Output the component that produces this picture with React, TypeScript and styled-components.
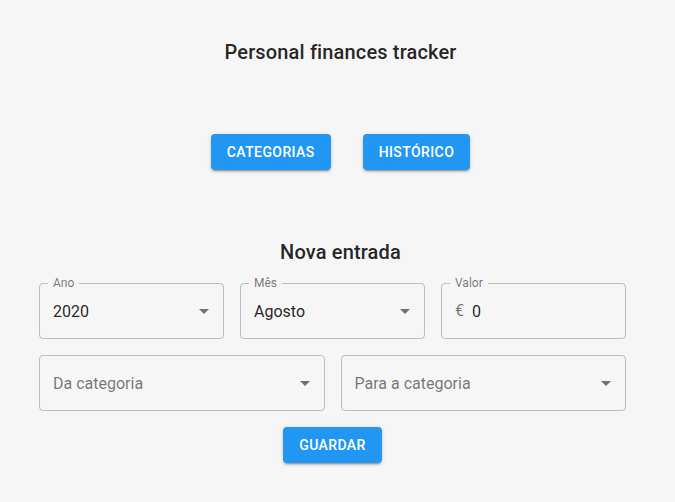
import React from "react";
import styled, { createGlobalStyle } from "styled-components";

const Global = createGlobalStyle`
  html, body { margin: 0; padding: 0; background: #f6f6f6; }
  body { font-family: Roboto, "Liberation Sans", Arial, sans-serif; color: rgba(0,0,0,0.87); }
`;

const Page = styled.div`
  width: 675px;
  min-height: 502px;
  padding-top: 36px;
  box-sizing: border-box;
`;

const Header = styled.header`
  display: flex;
  flex-direction: column;
  align-items: center;
  padding-left: 6px;
`;

const Title = styled.h6<{ $mt?: number }>`
  margin: ${(p) => p.$mt ?? 0}px 0 0;
  font-size: 20px;
  font-weight: 500;
  line-height: 32px;
  letter-spacing: 0.0075em;
  color: rgba(0, 0, 0, 0.87);
`;

const ButtonRow = styled.nav`
  display: flex;
  gap: 32px;
  margin-top: 66px;
`;

const Button = styled.button`
  height: 36px;
  padding: 6px 16px;
  border: none;
  border-radius: 4px;
  background: #2196f3;
  color: #fff;
  font-family: Roboto, "Liberation Sans", Arial, sans-serif;
  font-size: 14px;
  font-weight: 500;
  letter-spacing: 0.02857em;
  text-transform: uppercase;
  box-shadow: 0px 3px 1px -2px rgba(0, 0, 0, 0.2), 0px 2px 2px 0px rgba(0, 0, 0, 0.14),
    0px 1px 5px 0px rgba(0, 0, 0, 0.12);
  cursor: pointer;
`;

const Form = styled.form`
  margin-left: 39px;
  width: 587px;
  margin-top: 15px;
  display: flex;
  flex-direction: column;
  gap: 16px;
  align-items: stretch;
`;

const Row = styled.div<{ $cols: number }>`
  display: grid;
  grid-template-columns: repeat(${(p) => p.$cols}, 1fr);
  gap: 16px;
`;

const Field = styled.div`
  position: relative;
  height: 56px;
  box-sizing: border-box;
  border: 1px solid rgba(0, 0, 0, 0.23);
  border-radius: 4px;
  display: flex;
  align-items: center;
  padding: 0 7px 0 13px;
`;

const FloatLabel = styled.label`
  position: absolute;
  top: -8px;
  left: 8px;
  padding: 0 5px;
  background: #f6f6f6;
  font-size: 12px;
  line-height: 14px;
  color: rgba(0, 0, 0, 0.54);
`;

const Value = styled.span<{ $placeholder?: boolean }>`
  flex: 1;
  font-size: 16px;
  line-height: 19px;
  color: ${(p) => (p.$placeholder ? "rgba(0,0,0,0.54)" : "rgba(0,0,0,0.87)")};
`;

const Adornment = styled.span`
  font-size: 16px;
  color: rgba(0, 0, 0, 0.54);
  margin-right: 8px;
  margin-top: -2px;
`;

const Arrow = styled.svg`
  width: 24px;
  height: 24px;
  fill: rgba(0, 0, 0, 0.54);
  flex-shrink: 0;
`;

const Center = styled.div`
  display: flex;
  justify-content: center;
`;

const DropIcon = () => (
  <Arrow viewBox="0 0 24 24">
    <path d="M7 10l5 5 5-5z" />
  </Arrow>
);

const SelectField = ({ label, value, placeholder }: { label?: string; value?: string; placeholder?: string }) => (
  <Field>
    {label && <FloatLabel>{label}</FloatLabel>}
    <Value $placeholder={!value}>{value ?? placeholder}</Value>
    <DropIcon />
  </Field>
);

export default function App() {
  return (
    <Page>
      <Global />
      <Header>
        <Title>Personal finances tracker</Title>
        <ButtonRow>
          <Button>Categorias</Button>
          <Button>Histórico</Button>
        </ButtonRow>
        <Title $mt={66}>Nova entrada</Title>
      </Header>
      <Form onSubmit={(e) => e.preventDefault()}>
        <Row $cols={3}>
          <SelectField label="Ano" value="2020" />
          <SelectField label="Mês" value="Agosto" />
          <Field>
            <FloatLabel>Valor</FloatLabel>
            <Adornment>€</Adornment>
            <Value>0</Value>
          </Field>
        </Row>
        <Row $cols={2}>
          <SelectField placeholder="Da categoria" />
          <SelectField placeholder="Para a categoria" />
        </Row>
        <Center>
          <Button type="submit">Guardar</Button>
        </Center>
      </Form>
    </Page>
  );
}
